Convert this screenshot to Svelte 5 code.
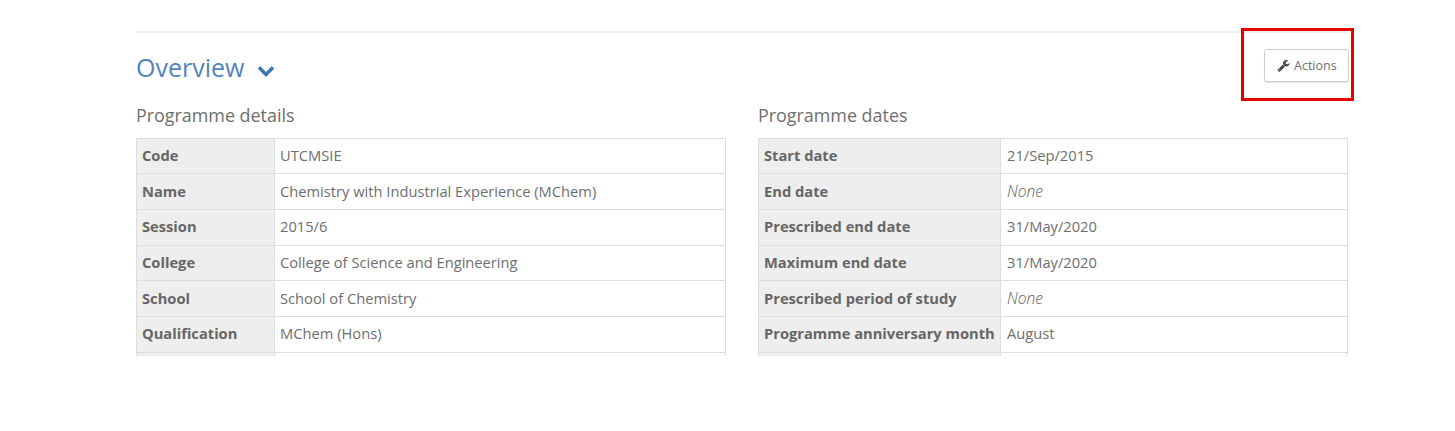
<script>
  const details = [
    ['Code', 'UTCMSIE'],
    ['Name', 'Chemistry with Industrial Experience (MChem)'],
    ['Session', '2015/6'],
    ['College', 'College of Science and Engineering'],
    ['School', 'School of Chemistry'],
    ['Qualification', 'MChem (Hons)'],
    ['', '']
  ];
  const dates = [
    ['Start date', '21/Sep/2015'],
    ['End date', 'None', true],
    ['Prescribed end date', '31/May/2020'],
    ['Maximum end date', '31/May/2020'],
    ['Prescribed period of study', 'None', true],
    ['Programme anniversary month', 'August'],
    ['', '']
  ];
  const panels = [
    { title: 'Programme details', rows: details, kind: 'details' },
    { title: 'Programme dates', rows: dates, kind: 'dates' }
  ];
</script>

<div class="page">
  <hr class="rule" />
  <header class="head">
    <h2 class="title">Overview
      <svg class="chev" viewBox="0 0 1792 1792" aria-hidden="true"><path d="M1683 808l-742 741q-19 19-45 19t-45-19l-742-741q-19-19-19-45.5t19-45.5l166-165q19-19 45-19t45 19l531 531 531-531q19-19 45-19t45 19l166 165q19 19 19 45.5t-19 45.5z"/></svg>
    </h2>
    <div class="action-wrap">
      <button class="btn">
        <svg class="wrench" viewBox="0 0 1792 1792" aria-hidden="true"><path d="M448 1472q0-26-19-45t-45-19-45 19-19 45 19 45 45 19 45-19 19-45zm644-420l-682 682q-37 37-90 37-52 0-91-37l-106-108q-38-36-38-90 0-53 38-91l681-681q39 98 114.5 173.5t173.5 114.5zm634-435q0 39-23 106-47 134-164.5 217.5t-258.5 83.5q-185 0-316.5-131.5t-131.5-316.5 131.5-316.5 316.5-131.5q58 0 121.5 16.5t107.5 46.5q16 11 16 28t-16 28l-293 169v224l193 107q5-3 79-48.5t135.5-81 70.5-35.5q15 0 23.5 10t8.5 25z"/></svg>
        Actions
      </button>
      <div class="highlight"></div>
    </div>
  </header>
  <div class="cols">
    {#each panels as p}
      <section class="panel">
        <h3 class="sub">{p.title}</h3>
        <div class="clip">
          <table class={p.kind}>
            <tbody>
              {#each p.rows as r}
                <tr>
                  <th>{r[0]}</th>
                  <td class:none={r[2]}>{r[1]}</td>
                </tr>
              {/each}
            </tbody>
          </table>
        </div>
      </section>
    {/each}
  </div>
</div>

<style>
  :global(body) {
    margin: 0;
    background: #fff;
  }
  .page {
    width: 1212px;
    margin-left: 136px;
    padding-top: 31px;
    font-family: "Open Sans", sans-serif;
    color: #666;
    height: 400px;
  }
  .rule {
    margin: 0;
    border: 0;
    border-top: 2px solid #eee;
  }
  .head {
    display: flex;
    justify-content: space-between;
    align-items: flex-start;
    height: 66px;
  }
  .title {
    margin: 16px 0 0;
    font-size: 25px;
    line-height: 37px;
    font-weight: 400;
    color: #5283bd;
    display: flex;
    align-items: center;
    gap: 13px;
  }
  .chev {
    width: 18px;
    height: 18px;
    fill: #3f74b5;
    margin-top: 4px;
  }
  .action-wrap {
    position: relative;
    margin-top: 16px;
    margin-right: -1px;
  }
  .btn {
    display: flex;
    align-items: center;
    gap: 4px;
    width: 85px;
    height: 33px;
    padding: 0 0 0 12px;
    box-sizing: border-box;
    border: 1px solid #ccc;
    border-radius: 3px;
    background: #fff;
    box-shadow: 0 1px 1px rgba(0, 0, 0, 0.1);
    font: 12.5px "Open Sans", sans-serif;
    color: #6e6e6e;
  }
  .wrench {
    width: 13px;
    height: 13px;
    fill: #444;
  }
  .highlight {
    position: absolute;
    left: -23px;
    top: -21px;
    width: 113px;
    height: 73px;
    box-sizing: border-box;
    border: 3px solid #e60000;
    pointer-events: none;
  }
  .cols {
    display: grid;
    grid-template-columns: 590px 590px;
    gap: 32px;
  }
  .sub {
    margin: 0;
    height: 39px;
    font-size: 17.9px;
    line-height: 33px;
    font-weight: 400;
    color: #6e6e6e;
  }
  .clip {
    height: 218px;
    overflow: hidden;
  }
  table {
    width: 100%;
    border-collapse: collapse;
    table-layout: fixed;
    font-size: 14.7px;
    margin-top: -0.4px;
  }
  tr {
    height: 35.67px;
  }
  th, td {
    border: 1px solid #ddd;
    padding: 0 5px 2px;
    text-align: left;
    line-height: 20px;
    white-space: nowrap;
  }
  td {
    color: #6e6e6e;
  }
  th {
    background: #eee;
    font-weight: 700;
    color: #666;
  }
  .details th {
    width: 127px;
  }
  .dates th {
    width: 231px;
  }
  .dates td {
    padding-left: 6px;
  }
  .none {
    font-style: italic;
    font-weight: 300;
    font-size: 15.6px;
    color: #5c5c5c;
  }
</style>
